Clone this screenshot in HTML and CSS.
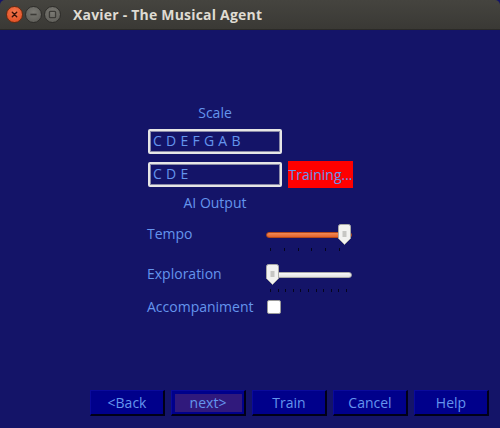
FILE: index.html
```html
<!DOCTYPE html>
<html>
<head>
<meta charset="utf-8">
<link rel="stylesheet" href="styles.css">
</head>
<body>
<div class="titlebar">
  <div class="winbtns">
    <span class="wb close"><svg width="17" height="17" viewBox="0 0 17 17"><path d="M6 6 L11 11 M11 6 L6 11" stroke="#3a1208" stroke-width="1.6" stroke-linecap="round"/></svg></span>
    <span class="wb"><svg width="17" height="17" viewBox="0 0 17 17"><path d="M5 8.5 H12" stroke="#3c3b37" stroke-width="1.8"/></svg></span>
    <span class="wb"><svg width="17" height="17" viewBox="0 0 17 17"><rect x="5" y="5" width="7" height="7" rx="1" fill="none" stroke="#3c3b37" stroke-width="1.5"/></svg></span>
  </div>
  <div class="title">Xavier - The Musical Agent</div>
</div>
<div class="window">
  <div class="form">
    <div class="caption">Scale</div>
    <div class="entryrow first"><div class="entry">C D E F G A B</div></div>
    <div class="entryrow second"><div class="entry">C D E</div><div class="status">Training...</div></div>
    <div class="caption output">AI Output</div>
    <div class="ctrlrow tempo">
      <div class="label">Tempo</div>
      <div class="scale">
        <div class="trough full"></div>
        <svg class="handle right" width="13" height="21" viewBox="0 0 13 21"><path d="M2.5 0.5 H10.5 Q12.5 0.5 12.5 2.5 V14.5 L6.5 20.5 L0.5 14.5 V2.5 Q0.5 0.5 2.5 0.5 Z" fill="#f2f2f0" stroke="#a9a9a6"/><path d="M4.5 8 H8.5 M4.5 10 H8.5 M4.5 12 H8.5" stroke="#9a9a96" stroke-width="1"/></svg>
        <div class="ticks six"><i></i><i></i><i></i><i></i><i></i><i></i></div>
      </div>
    </div>
    <div class="ctrlrow explore">
      <div class="label">Exploration</div>
      <div class="scale">
        <div class="trough empty"></div>
        <svg class="handle left" width="13" height="21" viewBox="0 0 13 21"><path d="M2.5 0.5 H10.5 Q12.5 0.5 12.5 2.5 V14.5 L6.5 20.5 L0.5 14.5 V2.5 Q0.5 0.5 2.5 0.5 Z" fill="#f2f2f0" stroke="#a9a9a6"/><path d="M4.5 8 H8.5 M4.5 10 H8.5 M4.5 12 H8.5" stroke="#9a9a96" stroke-width="1"/></svg>
        <div class="ticks eleven"><i></i><i></i><i></i><i></i><i></i><i></i><i></i><i></i><i></i><i></i><i></i></div>
      </div>
    </div>
    <div class="ctrlrow accomp">
      <div class="label">Accompaniment</div>
      <div class="check"></div>
    </div>
  </div>
  <div class="buttons">
    <div class="btn">&lt;Back</div>
    <div class="btn active"><span>next&gt;</span></div>
    <div class="btn">Train</div>
    <div class="btn">Cancel</div>
    <div class="btn">Help</div>
  </div>
</div>
</body>
</html>
```
FILE: styles.css
```css
* { box-sizing: border-box; }
html, body { margin: 0; padding: 0; }
body {
  width: 500px;
  height: 428px;
  overflow: hidden;
  background: #141468;
  font-family: "Open Sans", "Noto Sans", sans-serif;
  font-size: 14px;
  color: #6495ed;
}
.titlebar {
  height: 30px;
  background: linear-gradient(#45443f, #3a3935);
  border-radius: 5px 5px 0 0;
  display: flex;
  align-items: center;
  padding-left: 6px;
  border-bottom: 1px solid #2b2a27;
}
.winbtns { display: flex; gap: 2px; }
.wb {
  width: 17px; height: 17px;
  border-radius: 50%;
  background: radial-gradient(circle at 50% 35%, #7b7a74, #5a5954);
  border: 1px solid #2e2d2a;
  display: flex; align-items: center; justify-content: center;
}
.wb svg { display: block; }
.wb.close { background: radial-gradient(circle at 50% 35%, #f47a50, #e0481c); border-color: #6a2a10; }
.title {
  margin-left: 12px;
  color: #dfdbd2;
  font-weight: bold;
  font-size: 14px;
  letter-spacing: 0.2px;
}
.window {
  height: 398px;
  display: flex;
  flex-direction: column;
}
.form {
  margin-left: 147px;
  padding-top: 74px;
  display: flex;
  flex-direction: column;
  width: 210px;
}
.caption {
  width: 136px;
  text-align: center;
  line-height: 18px;
  height: 18px;
}
.entryrow { display: flex; align-items: center; }
.entryrow.first { margin-top: 7px; height: 25px; }
.entryrow.second { margin-top: 7px; height: 27px; }
.entry {
  margin-left: 1px;
  width: 134px;
  height: 25px;
  border: 2px solid #e6e6e6;
  border-radius: 2px;
  box-shadow: 0 0 0 1px #8a8aa8 inset;
  padding-left: 3px;
  line-height: 20px;
  letter-spacing: 0.3px;
}
.status {
  margin-left: 6px;
  width: 65px;
  height: 27px;
  background: #ff0000;
  line-height: 27px;
  text-align: center;
  white-space: nowrap;
}
.caption.output { margin-top: 6px; }
.ctrlrow { display: flex; }
.label { width: 119px; line-height: 20px; }
.ctrlrow.tempo { margin-top: 12px; height: 30px; }
.ctrlrow.explore { margin-top: 10px; height: 30px; }
.ctrlrow.accomp { margin-top: 3px; height: 20px; align-items: center; }
.scale { position: relative; width: 86px; height: 30px; }
.trough {
  position: absolute;
  left: 0; right: 0; top: 8px;
  height: 6px;
  border-radius: 3px;
}
.trough.full { background: linear-gradient(#f08a58, #e4622a); border: 1px solid #b2481a; }
.trough.empty { background: linear-gradient(#fafafa, #e2e2e0); border: 1px solid #aaa; }
.handle { position: absolute; top: 0; }
.handle.right { left: 72px; }
.handle.left { left: 0; }
.ticks {
  position: absolute;
  top: 24px;
  left: 4px;
  display: flex;
  justify-content: space-between;
}
.ticks.six { width: 70px; }
.ticks.eleven { width: 77px; top: 25px; }
.ticks i { display: block; width: 1px; height: 3px; background: #05051e; }
.check {
  margin-left: 1px;
  width: 14px; height: 14px;
  background: #fff;
  border: 1px solid #9a9a9a;
  border-radius: 2px;
}
.buttons {
  margin-top: auto;
  margin-bottom: 12px;
  margin-left: 90px;
  display: flex;
  gap: 6px;
}
.btn {
  width: 75px;
  height: 26px;
  background: #00008b;
  border-top: 1px solid #0a0a9c;
  border-left: 1px solid #0a0a9c;
  border-right: 2px solid #000018;
  border-bottom: 2px solid #000018;
  display: flex;
  align-items: center;
  justify-content: center;
  line-height: 20px;
}
.btn.active span {
  width: 67px;
  height: 18px;
  background: #30197c;
  text-align: center;
  line-height: 18px;
}
```
